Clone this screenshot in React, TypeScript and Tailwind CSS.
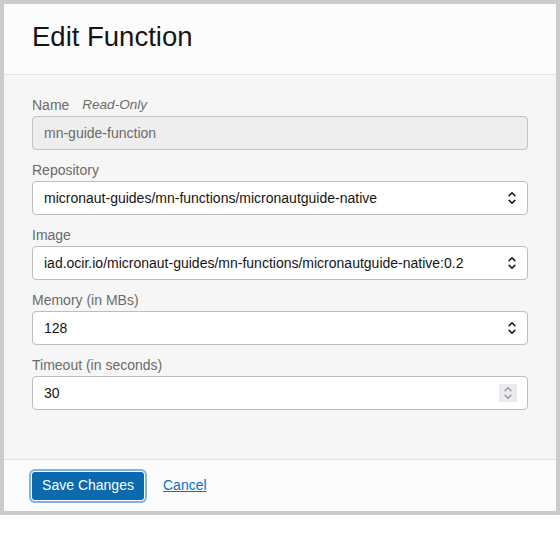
import React from 'react';

const fields = [
  { label: 'Repository', value: 'micronaut-guides/mn-functions/micronautguide-native', kind: 'select' },
  { label: 'Image', value: 'iad.ocir.io/micronaut-guides/mn-functions/micronautguide-native:0.2', kind: 'select' },
  { label: 'Memory (in MBs)', value: '128', kind: 'select' },
  { label: 'Timeout (in seconds)', value: '30', kind: 'number' },
];

function Chevrons({ color = '#161513' }: { color?: string }) {
  return (
    <svg width="8" height="14" viewBox="0 0 8 14" fill="none" stroke={color} strokeWidth="1.5" strokeLinecap="round" strokeLinejoin="round">
      <path d="M1.2 4.6 L4 1.8 L6.8 4.6" />
      <path d="M1.2 9.4 L4 12.2 L6.8 9.4" />
    </svg>
  );
}

function Field({ label, value, kind }: { label: string; value: string; kind: string }) {
  return (
    <div className="flex flex-col">
      <span className="h-[18px] text-[14px] leading-[14px] text-[#6b6b6b]">{label}</span>
      <div className="flex h-[34px] items-center justify-between rounded-[4px] border border-[#bdbdbd] bg-white pl-[11px] pr-[8px] text-[14px] text-[#161513]">
        <span>{value}</span>
        {kind === 'select' ? (
          <span className="mr-[3px] flex items-center">
            <Chevrons />
          </span>
        ) : (
          <span className="mr-[2px] flex h-[18px] w-[18px] items-center justify-center bg-[#ebebef]">
            <Chevrons color="#9a9aa6" />
          </span>
        )}
      </div>
    </div>
  );
}

export default function App() {
  return (
    <div className="h-[545px] w-[560px] bg-white font-['Liberation_Sans',Arial,sans-serif]">
      <div className="flex h-[515px] w-[560px] flex-col border-4 border-[#cbcbcb]">
        <header className="h-[71px] border-b border-[#e4e4e4] bg-[#fcfcfc] pl-[28px] pt-[19px]">
          <h1 className="text-[27.5px] leading-[28px] text-[#161513]">Edit Function</h1>
        </header>

        <section className="flex h-[385px] flex-col gap-[13px] border-b border-[#e4e4e4] bg-[#f6f6f6] px-[28px] pt-[23px]">
          <div className="flex flex-col">
            <div className="flex h-[18px] items-start text-[14px] leading-[14px] text-[#6b6b6b]">
              <span>Name</span>
              <span className="ml-[13px] text-[13.5px] italic">Read-Only</span>
            </div>
            <div className="flex h-[34px] items-center rounded-[4px] border border-[#c3c3c3] bg-[#eeeeee] pl-[11px] text-[14px] text-[#6b6b6b]">
              mn-guide-function
            </div>
          </div>
          {fields.map((f) => (
            <Field key={f.label} label={f.label} value={f.value} kind={f.kind} />
          ))}
        </section>

        <footer className="flex flex-1 items-center bg-[#fcfcfc] pl-[28px]">
          <button className="h-[28px] w-[112px] rounded-[3px] bg-[#0a6aad] text-[14px] text-white shadow-[0_0_0_1px_#ffffff,0_0_0_3px_#7eb0e3]">
            Save Changes
          </button>
          <a href="#" className="ml-[19px] text-[14px] text-[#0572ce] underline">
            Cancel
          </a>
        </footer>
      </div>
    </div>
  );
}
